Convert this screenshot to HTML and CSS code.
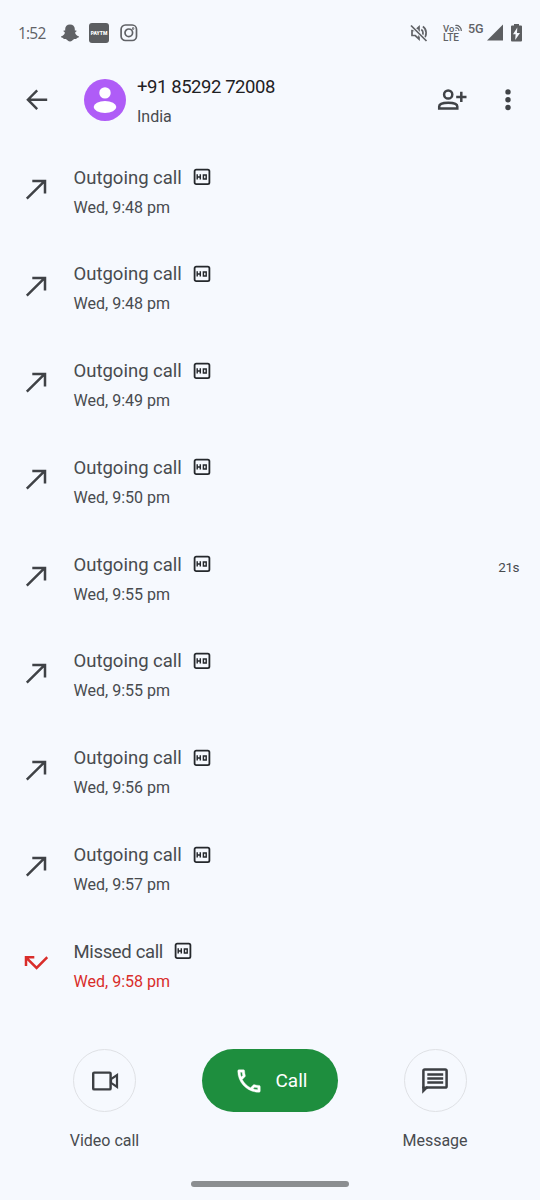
FILE: index.html
```
<!DOCTYPE html>
<html lang="en">
<head>
<meta charset="utf-8">
<title>Call history</title>
<link rel="stylesheet" href="styles.css">
</head>
<body>
<svg class="defs" width="0" height="0" aria-hidden="true">
  <symbol id="outgoing" viewBox="0 0 24 24"><path d="M2.8 21.6 20.500 4.200M8.300 4H21V16.600" fill="none" stroke="currentColor" stroke-width="2.5"/></symbol>
  <symbol id="missed" viewBox="0 0 24 24"><path d="M2.2 6.700 12.6 17 23.300 6.200M2 15V6.300H10.300" fill="none" stroke="currentColor" stroke-width="2.5"/></symbol>
  <symbol id="hd" viewBox="0 0 18 18"><rect x="1.6" y="1.6" width="14.8" height="14.5" rx="1.6" fill="none" stroke="currentColor" stroke-width="1.8"/><path d="M4.2 6.300v5.2M7.300 6.300v5.2M4.2 8.900h3.1M10.400 6.900h2.800v4h-2.800z" fill="none" stroke="currentColor" stroke-width="1.45"/></symbol>
</svg>
<div class="screen">
  <div class="status">
    <span class="clock">1:52</span>
    <svg class="snap" width="18" height="18" viewBox="0 0 18 18"><path fill="#606266" d="M9 .4C6 .4 4.200 2.500 4.200 5v1.500c-.7.1-1.700-.2-1.700.6 0 .7 1 .9 1.300 1.300.4 1-1.300 3.400-3.500 3.900-.6.4.1 1.500 1.900 1.700.3.400.2 1 .7 1.100.8.1 1.800-.2 2.600.3.900.700 1.900 2 3.500 2s2.600-1.300 3.500-2c.8-.5 1.800-.2 2.600-.3.5-.1.4-.7.7-1.100 1.800-.2 2.500-1.300 1.900-1.700-2.200-.5-3.900-2.900-3.500-3.900.3-.4 1.300-.6 1.300-1.300 0-.8-1-.5-1.700-.6V5C13.800 2.500 12 .4 9 .4z"/></svg>
    <span class="paytm">PAYTM</span>
    <svg class="insta" width="18" height="18" viewBox="0 0 18 18" fill="none" stroke="#606266" stroke-width="1.700"><rect x="1.100" y="1" width="15.400" height="15.500" rx="4.300"/><circle cx="8.800" cy="8.800" r="3.800"/><circle cx="13.100" cy="4.500" r=".4"/></svg>
    <span class="spacer"></span>
    <svg class="mute" width="18" height="18" viewBox="0 0 18 18" fill="none" stroke="#606266" stroke-width="1.700"><path d="M2 6.500h3.200L9 3v12l-3.800-3.500H2zM11.300 5.500c2.300 1.600 2.300 5.500 0 7M12.800 2.500c4.300 2.500 4.300 9.500.7 12.300"/><path d="M1 1.500 16.500 17" stroke="#f6f9fe" stroke-width="3.500"/><path d="M1 1.500 16.500 17"/></svg>
    <div class="volte"><span class="vo">Vo<svg width="7" height="8" viewBox="0 0 7 7" fill="none" stroke="#606266" stroke-width="1.200"><path d="M.3 1C3.500.5 6.500 3 6.300 6.500M.3 3.500C3 3 4 4.500 4 6.500M1 5.500v1"/></svg></span><span>LTE</span></div>
    <span class="five">5G</span>
    <svg class="signal" width="16" height="17" viewBox="0 0 16 17"><path d="M0 16.500 16 .5v16z" fill="#5c5e61"/></svg>
    <svg class="battery" width="11" height="18" viewBox="0 0 11 18"><path d="M3 0h5v1.500h2q1 0 1 1V16.500q0 1-1 1H1q-1 0-1-1V2.500q0-1 1-1h2z" fill="#5c5e61"/><path d="M6.300 3.500 2 10.300h2.600L4.200 16 9 9H6z" fill="#f6f9fe"/></svg>
  </div>

  <header class="header">
    <svg class="back" width="24" height="24" viewBox="0 0 24 24" fill="none" stroke="#404347" stroke-width="2.400"><path d="M23.200 11.700H4M13.200 2.300 3.900 11.700l9.300 9.400"/></svg>
    <svg class="avatar" width="42" height="42" viewBox="0 0 42 42"><circle cx="21" cy="21" r="21" fill="#af5cf7"/><circle cx="21" cy="13.900" r="5.700" fill="#fff"/><ellipse cx="21" cy="28" rx="11.300" ry="5.900" fill="#fff"/></svg>
    <div class="contact"><div class="number">+91 85292 72008</div><div class="country">India</div></div>
    <svg class="add" width="30" height="24" viewBox="0 0 30 24" fill="none" stroke="#404347" stroke-width="2.500"><circle cx="11.200" cy="6.500" r="4.100"/><path d="M2.200 20.600v-2.200c0-5 18.100-5 18.100 0v2.200zM24.300 3.700v10.300M19.200 8.900h10.300"/></svg>
    <svg class="more" width="8" height="24" viewBox="0 0 8 24" fill="#404347"><circle cx="4" cy="3.900" r="2.700"/><circle cx="4" cy="11.700" r="2.700"/><circle cx="4" cy="19.500" r="2.700"/></svg>
  </header>

  <main class="log">
    <div class="row"><svg class="dir"><use href="#outgoing"/></svg><div><div class="title"><span>Outgoing call</span><svg class="hd"><use href="#hd"/></svg></div><div class="time">Wed, 9:48 pm</div></div></div>
    <div class="row"><svg class="dir"><use href="#outgoing"/></svg><div><div class="title"><span>Outgoing call</span><svg class="hd"><use href="#hd"/></svg></div><div class="time">Wed, 9:48 pm</div></div></div>
    <div class="row"><svg class="dir"><use href="#outgoing"/></svg><div><div class="title"><span>Outgoing call</span><svg class="hd"><use href="#hd"/></svg></div><div class="time">Wed, 9:49 pm</div></div></div>
    <div class="row"><svg class="dir"><use href="#outgoing"/></svg><div><div class="title"><span>Outgoing call</span><svg class="hd"><use href="#hd"/></svg></div><div class="time">Wed, 9:50 pm</div></div></div>
    <div class="row"><svg class="dir"><use href="#outgoing"/></svg><div><div class="title"><span>Outgoing call</span><svg class="hd"><use href="#hd"/></svg></div><div class="time">Wed, 9:55 pm</div></div><span class="duration">21s</span></div>
    <div class="row"><svg class="dir"><use href="#outgoing"/></svg><div><div class="title"><span>Outgoing call</span><svg class="hd"><use href="#hd"/></svg></div><div class="time">Wed, 9:55 pm</div></div></div>
    <div class="row"><svg class="dir"><use href="#outgoing"/></svg><div><div class="title"><span>Outgoing call</span><svg class="hd"><use href="#hd"/></svg></div><div class="time">Wed, 9:56 pm</div></div></div>
    <div class="row"><svg class="dir"><use href="#outgoing"/></svg><div><div class="title"><span>Outgoing call</span><svg class="hd"><use href="#hd"/></svg></div><div class="time">Wed, 9:57 pm</div></div></div>
    <div class="row missed"><svg class="dir"><use href="#missed"/></svg><div><div class="title"><span>Missed call</span><svg class="hd"><use href="#hd"/></svg></div><div class="time">Wed, 9:58 pm</div></div></div>
  </main>

  <footer class="actions">
    <div class="action">
      <div class="round"><svg width="28" height="28" viewBox="0 0 28 28" fill="none" stroke="#3c3f43" stroke-width="2.400"><rect x="2.200" y="5.600" width="17.400" height="16.800" rx="1"/><path d="M20 12.200 26 8v12l-6-4.200z" stroke-width="2.200"/></svg></div>
      <span>Video call</span>
    </div>
    <div class="call"><svg width="30" height="30" viewBox="0 0 24 24" fill="#fff" stroke="#fff" stroke-width=".3"><path d="M6.540 5c.06.89.21 1.760.45 2.590l-1.200 1.200c-.41-1.200-.67-2.470-.76-3.790h1.510m9.860 12.020c.85.24 1.720.39 2.600.45v1.490c-1.320-.09-2.590-.35-3.800-.75l1.200-1.190M7.500 3H4c-.55 0-1 .45-1 1 0 9.390 7.610 17 17 17 .55 0 1-.45 1-1v-3.490c0-.55-.45-1-1-1-1.240 0-2.450-.2-3.570-.57-.1-.04-.21-.05-.31-.05-.26 0-.51.1-.71.29l-2.200 2.200c-2.830-1.450-5.150-3.760-6.590-6.590l2.200-2.200c.28-.28.36-.67.25-1.020C8.700 6.450 8.500 5.250 8.500 4c0-.55-.45-1-1-1z"/></svg><span>Call</span></div>
    <div class="action">
      <div class="round"><svg width="28" height="28" viewBox="0 0 28 28" fill="none" stroke="#3c3f43" stroke-width="2.500"><path d="M2.400 21.500V3.800q0-1.400 1.400-1.400h20.400q1.400 0 1.400 1.400v15.400q0 1.400-1.400 1.400H5"/><path d="M1.200 19.500v7.300l5.500-5.600V19.500z" fill="#3c3f43" stroke="none"/><path d="M6.300 7.600h15.900M6.300 11.500h15.900M6.300 15.400h15.900"/></svg></div>
      <span>Message</span>
    </div>
  </footer>
  <div class="home"></div>
</div>
</body>
</html>
```

FILE: styles.css
```
body { margin: 0; }
* { box-sizing: border-box; }
svg { display: block; flex: none; }
.defs { position: absolute; }
.screen {
  width: 540px;
  height: 1200px;
  overflow: hidden;
  display: flex;
  flex-direction: column;
  background: #f6f9fe;
  color: #484b4f;
  font-family: Roboto, "Liberation Sans", sans-serif;
  font-weight: 400;
  white-space: nowrap;
}
.status {
  height: 66px;
  padding: 0 18px 0 18px;
  display: flex;
  align-items: center;
  color: #606266;
}
.clock { width: 43px; font: 15.5px/20px "Open Sans", sans-serif; letter-spacing: -.8px; }
.paytm {
  width: 20px;
  height: 20px;
  margin: 0 11px 0 10px;
  border-radius: 3px;
  background: #5c5e61;
  color: #fff;
  font-size: 5px;
  font-weight: 900;
  line-height: 21px;
  text-align: center;
}
.spacer { flex: 1; }
.volte { width: 19px; margin: 0 6px 0 15px; font-size: 10px; font-weight: 500; line-height: 9px; }
.volte > span { display: flex; gap: 1px; }
.volte .vo { font-size: 9.5px; }
.five { width: 19px; font-size: 12.5px; font-weight: 500; margin-bottom: 9px; }
.signal { margin-bottom: 1px; }
.battery { margin: 0 0 0 8px; }
.header { height: 75px; display: flex; align-items: flex-start; padding: 13px 28.500px 0 24px; }
.back { margin-top: 9px; }
.avatar { margin-left: 36px; }
.contact { margin-left: 11px; flex: 1; margin-top: -3px; }
.number { font-size: 18.5px; line-height: 22px; letter-spacing: -.43px; color: #1f2124; }
.country { font-size: 16px; line-height: 22px; margin-top: 8px; }
.add { margin-top: 9px; }
.more { margin: 9px 0 0 36.500px; }
.row { height: 96.8px; display: flex; padding: 23.500px 21px 0 24px; }
.dir { width: 24px; height: 24px; margin: 12.300px 25.500px 0 0; color: #3f4246; }
.title { display: flex; align-items: center; gap: 11px; height: 26px; font-size: 18.5px; }
.hd { width: 18px; height: 18px; margin-top: -1px; color: #25282c; }
.time { font-size: 16.05px; line-height: 22px; margin-top: 6px; }
.duration { margin: 5px 0 0 auto; font-size: 13.5px; line-height: 20px; letter-spacing: -.5px; }
.missed .dir, .missed .time { color: #d92d2a; }
.missed .title { letter-spacing: -.35px; }
.actions { display: flex; justify-content: space-between; padding: 37px 65px 0 65px; height: 154px; }
.action { width: 80px; display: flex; flex-direction: column; align-items: center; font-size: 16px; line-height: 22px; gap: 18px; }
.action:first-child { width: 79px; }
.round { width: 63px; height: 63px; border: 1.5px solid #dfe1e5; border-radius: 50%; display: grid; place-items: center; }
.call { width: 136px; height: 63px; border-radius: 32px; background: #1e8e3e; color: #fff; display: flex; align-items: center; gap: 12px; padding-left: 32px; font-size: 19px; }
.home { width: 158px; height: 6px; border-radius: 3px; margin: 15px auto 0; background: #8b8e91; }
```
